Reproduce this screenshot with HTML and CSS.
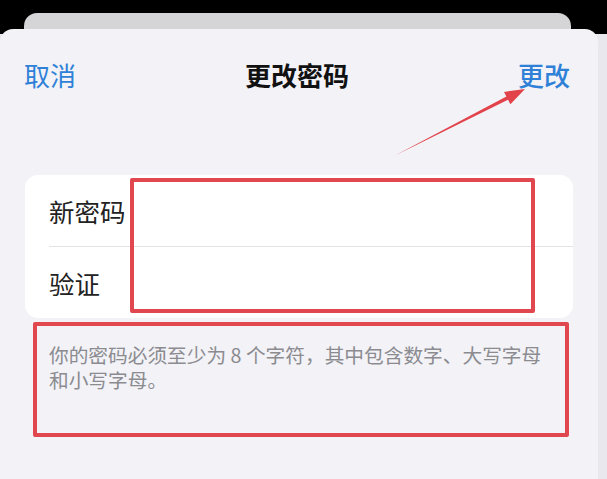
FILE: index.html
```html
<!DOCTYPE html>
<html lang="zh-CN">
  <head>
    <meta charset="UTF-8" />
    <meta name="viewport" content="width=device-width, initial-scale=1.0" />
    <title>更改密码</title>
    <link rel="stylesheet" href="styles.css">
  </head>
  <body>
    <div class="back-card"></div>
    <div class="sheet">
      <div class="sheet-header">
        <button class="header-btn">取消</button>
        <div class="header-title">更改密码</div>
        <button class="header-btn header-btn-done">更改</button>
      </div>
      <div class="form-card">
        <div class="form-row">
          <span class="form-label">新密码</span>
        </div>
        <div class="form-row form-row-divided">
          <span class="form-label">验证</span>
        </div>
      </div>
      <p class="form-footer">你的密码必须至少为 8 个字符，其中包含数字、大写字母和小写字母。</p>

      <div class="mark mark-fields"></div>
      <div class="mark mark-footer"></div>
      <svg class="mark-arrow" width="598" height="140" viewBox="0 0 598 140">
        <polygon points="395,126.5 506.4,67.5 504,62.9 525,60 510.4,75.3 508,70.7" fill="#e2434a" />
      </svg>
    </div>
  </body>
</html>
```

FILE: styles.css
```css
body {
  margin: 0;
  background: linear-gradient(#000 0, #000 34px, #e9e9ed 34px);
  font-family: "Noto Sans CJK SC", "Noto Sans", sans-serif;
  overflow: hidden;
}
.back-card {
  height: 30px;
  margin: 13px 36px 0 24px;
  background-color: #d5d5d8;
  border-radius: 13px 13px 0 0;
}
.sheet {
  position: relative;
  width: 598px;
  height: 450px;
  margin-top: -14px;
  background-color: #f2f2f7;
  border-radius: 13px 13px 0 0;
}
.sheet-header {
  display: flex;
  align-items: center;
  justify-content: space-between;
  height: 90px;
  padding: 0 28px 0 24px;
}
.header-btn {
  border: none;
  background-color: transparent;
  padding: 0;
  font-family: inherit;
  font-size: 26px;
  color: #2f81d8;
}
.header-btn-done {
  font-weight: 500;
}
.header-title {
  font-size: 26px;
  font-weight: 700;
  color: #111;
}
.form-card {
  margin: 56px 25px 0 25px;
  background-color: #fff;
  border-radius: 13px;
}
.form-row {
  display: flex;
  align-items: center;
  height: 71px;
  margin-left: 24px;
}
.form-row-divided {
  border-top: 1px solid #e3e3e7;
}
.form-label {
  font-size: 25.5px;
  color: #222;
}
.form-footer {
  max-width: 505px;
  margin: 0;
  padding: 24px 0 0 49px;
  font-size: 19.7px;
  line-height: 25px;
  color: #8b8b90;
}
.mark {
  position: absolute;
  border: 4px solid #e0474e;
  border-radius: 2px;
  box-sizing: border-box;
}
.mark-fields {
  top: 149px;
  left: 130px;
  width: 405px;
  height: 135px;
}
.mark-footer {
  top: 293px;
  left: 33px;
  width: 536px;
  height: 115px;
}
.mark-arrow {
  position: absolute;
  top: 0;
  left: 0;
  pointer-events: none;
}
```
